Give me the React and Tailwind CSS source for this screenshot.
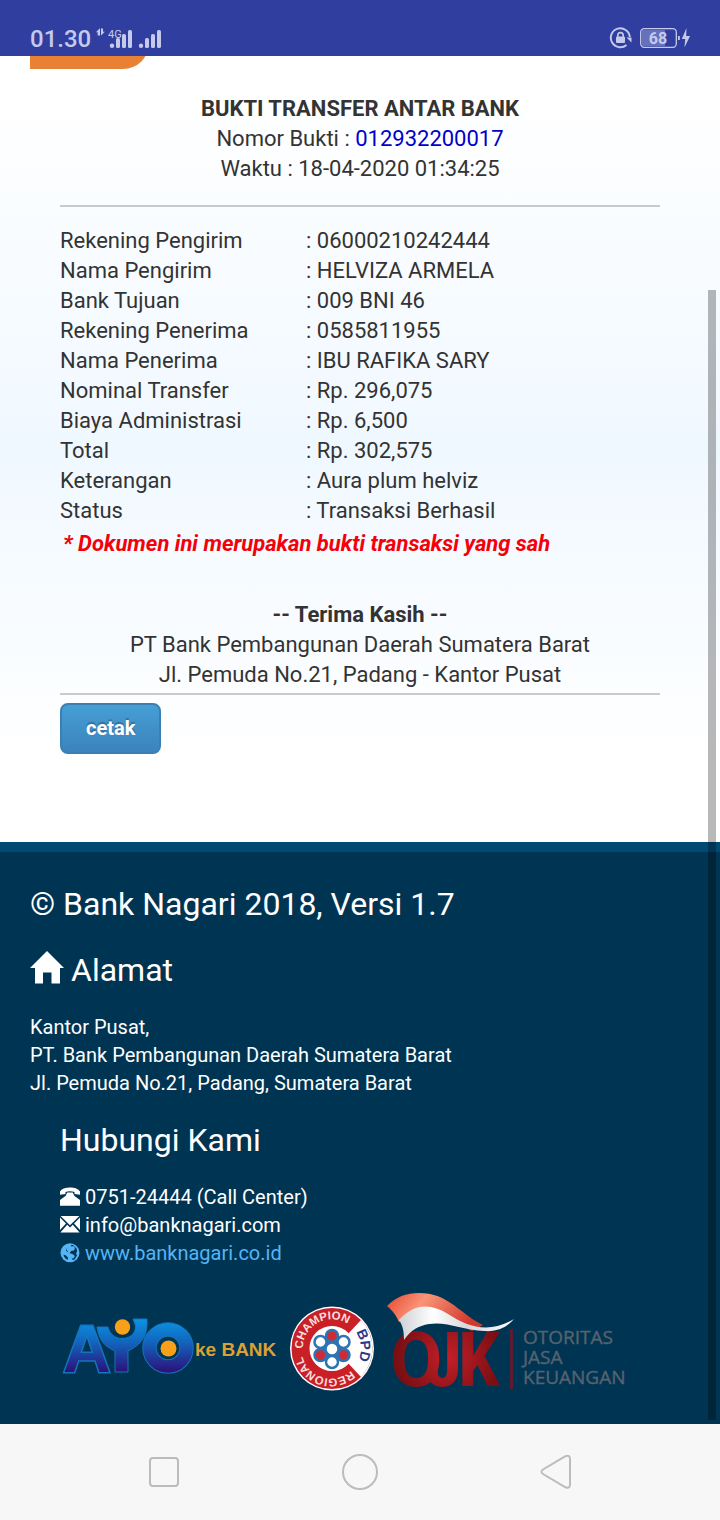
import React from "react";

const details = [
  ["Rekening Pengirim", "06000210242444"],
  ["Nama Pengirim", "HELVIZA ARMELA"],
  ["Bank Tujuan", "009 BNI 46"],
  ["Rekening Penerima", "0585811955"],
  ["Nama Penerima", "IBU RAFIKA SARY"],
  ["Nominal Transfer", "Rp. 296,075"],
  ["Biaya Administrasi", "Rp. 6,500"],
  ["Total", "Rp. 302,575"],
  ["Keterangan", "Aura plum helviz"],
  ["Status", "Transaksi Berhasil"],
];

function StatusBar() {
  return (
    <header className="flex h-14 items-end justify-between bg-[#303f9f] pr-[29px] pb-[3px] pl-[30px] text-[#c5caec]">
      <div className="flex items-center">
        <span className="text-[24px] leading-[28px] font-medium">01.30</span>
        <svg className="ml-1 h-7 w-[68px]" viewBox="0 0 68 28" fill="currentColor" aria-hidden="true">
          <path d="M4.500 3.500 1 7.300h1.700V10.500h2.300V3.500zM6 3.500V10.500l3.800-3.800H8V3.500z" />
          <text x="13" y="12.500" fontSize="11" fontFamily="Roboto, sans-serif">4G</text>
          <circle cx="17" cy="20.700" r="2.200" />
          <rect x="21" y="13" width="4" height="10" rx="1.600" />
          <rect x="27" y="9" width="4" height="14" rx="1.600" />
          <rect x="33" y="5" width="4" height="18" rx="1.600" />
          <circle cx="46" cy="20.700" r="2.200" />
          <rect x="50" y="13" width="4" height="10" rx="1.600" />
          <rect x="56" y="9" width="4" height="14" rx="1.600" />
          <rect x="62" y="5" width="4" height="18" rx="1.600" />
        </svg>
      </div>
      <svg className="h-7 w-[82px]" viewBox="0 0 82 28" fill="none" aria-hidden="true">
        <path d="M17.500 20A9.500 9.500 0 1 1 20.800 12" stroke="currentColor" strokeWidth="1.900" />
        <path d="M17.500 12.500h5v5z" fill="currentColor" />
        <path d="M8.800 12v-1.700a2.700 2.700 0 0 1 5.400 0V12" stroke="currentColor" strokeWidth="1.600" />
        <rect x="7" y="11.500" width="9" height="6.500" rx="1" fill="currentColor" />
        <rect x="33" y="5" width="23" height="16" fill="#6571bb" />
        <rect x="31.700" y="3.700" width="35.600" height="18.600" rx="3.500" stroke="currentColor" strokeWidth="1.300" />
        <rect x="69" y="11" width="1.800" height="4" fill="currentColor" />
        <text x="49" y="18.500" textAnchor="middle" fontSize="16" fontWeight="700" fontFamily="Roboto, sans-serif" fill="currentColor">68</text>
        <path d="M77.500 3 72.800 14h3.400l-.7 8.500L81 11h-3.800z" fill="currentColor" />
      </svg>
    </header>
  );
}

function HomeIcon() {
  return (
    <svg className="h-[38px] w-[34px]" viewBox="0 0 34 38" fill="currentColor" aria-hidden="true">
      <path d="M17 0 34 17H30V32.500H21.500V21.500H13V32.500H5V17H0z" />
    </svg>
  );
}

function PhoneIcon() {
  return (
    <svg className="h-5 w-5" viewBox="0 0 20 20" fill="currentColor" aria-hidden="true">
      <path d="M0 4.600C1.500 2 5.200.500 10 .500s8.500 1.500 10 4.100V7.800L14.500 7V5C12 4 8 4 5.500 5V7L0 7.800z" />
      <path d="M7.300 5.500h5.400L14.500 9 20 13v5.800H0V13L5.500 9z" />
    </svg>
  );
}

function MailIcon() {
  return (
    <svg className="h-5 w-5" viewBox="0 0 20 20" fill="currentColor" aria-hidden="true">
      <path d="M.6 1h18.800L10 10.300z" />
      <path d="M0 2.500 6 8.500 0 15zM20 2.500 14 8.500 20 15zM7.200 9.800 10 12.500 12.800 9.800 19.600 17.500H.4z" />
    </svg>
  );
}

function GlobeIcon() {
  return (
    <svg className="h-5 w-5" viewBox="0 0 20 20" aria-hidden="true">
      <circle cx="10" cy="9.700" r="9.500" fill="currentColor" />
      <path d="M12 1.800 13.500 2.500 16.500 5.500 17.200 8 16 10.500 17 12.500 14.500 16.500 12.500 17 11.800 14.500 10 13.500 10.800 11.500 8.500 10.500 7.500 8.500 6 8 6.800 5.500 9 4.500z" fill="#003453" />
      <path d="M9.500 2.500 12 3.500 13.500 3 15 5 14 7.500 11 8 9.800 10.200 12.500 11 15 13 13 15.800 8.500 13 8 9 6.500 6z" fill="currentColor" />
      <path d="M3.500 11.500 6 12.500 8 14.500 8 16.800 6 16 4 13.500z" fill="#003453" />
    </svg>
  );
}

function AyoLogo() {
  return (
    <svg className="h-[110px] w-[220px] shrink-0" viewBox="0 0 220 110" role="img" aria-label="AYO ke BANK">
      <defs>
        <linearGradient id="ayo" gradientUnits="userSpaceOnUse" x1="0" y1="32" x2="0" y2="84">
          <stop offset="0" stopColor="#0a94e4" />
          <stop offset=".45" stopColor="#1264bd" />
          <stop offset="1" stopColor="#2c137b" />
        </linearGradient>
      </defs>
      <text x="3" y="85" fontFamily="Liberation Sans, sans-serif" fontWeight="700" fontSize="66" fill="url(#ayo)" stroke="#1474bd" strokeWidth="3" paintOrder="stroke">A</text>
      <path d="M37 40H48C50 48 56 51.500 62 51.500C72 51.500 77 44 75 37L73 32H87C88 49 82 57 68 64V85H55V64C44 59 39 53 37 40Z" fill="url(#ayo)" stroke="#1474bd" strokeWidth="1" />
      <circle cx="62.500" cy="40" r="7.700" fill="#f9a01b" />
      <circle cx="108" cy="61" r="18.500" fill="none" stroke="#1474bd" strokeWidth="14.500" />
      <circle cx="108" cy="61" r="18.500" fill="none" stroke="url(#ayo)" strokeWidth="12.500" />
      <circle cx="108.500" cy="61.500" r="8" fill="#f9a01b" />
      <text x="135" y="69" fontFamily="Liberation Sans, sans-serif" fontWeight="700" fontSize="19" fill="#dda033">ke BANK</text>
    </svg>
  );
}

function ChampionLogo() {
  return (
    <svg className="h-[110px] w-[86px] shrink-0" viewBox="0 0 86 110" role="img" aria-label="Regional Champion BPD">
      <defs>
        <path id="ringUpper" d="M14 65A29.200 29.200 0 1 1 72 65" />
        <path id="ringLower" d="M62 83.500A29.200 29.200 0 1 1 22.500 40.500" />
        <path id="ringRight" d="M61.500 39A29 29 0 0 1 62 83" />
      </defs>
      <circle cx="43" cy="61.500" r="42" fill="#fff" />
      <circle cx="43" cy="61.500" r="31.500" fill="none" stroke="#c92027" strokeWidth="18" />
      <path d="M58 48 72 33A41 41 0 0 1 72 90L58 75A20 20 0 0 0 58 48Z" fill="#fff" />
      <circle cx="43" cy="61.500" r="22" fill="#fff" />
      <g fontFamily="Liberation Sans, sans-serif" fontWeight="700" fontSize="11.500">
        <g fill="#f9dede">
          <text><textPath href="#ringUpper" startOffset="3">CHAMPION</textPath></text>
          <text><textPath href="#ringLower" startOffset="0">REGIONAL</textPath></text>
        </g>
        <text fontSize="14" fill="#2b3a88"><textPath href="#ringRight" startOffset="8">BPD</textPath></text>
      </g>
      <circle cx="43" cy="62" r="14" fill="#2d6da9" />
      <g stroke="#2d74b4" strokeWidth="2.500" fill="#fff">
        <circle cx="43" cy="49" r="6" fill="#cf2a35" />
        <circle cx="54.500" cy="55" r="6" />
        <circle cx="54.500" cy="68" r="6" fill="#cf2a35" />
        <circle cx="43" cy="75" r="6" />
        <circle cx="31.500" cy="68" r="6" fill="#cf2a35" />
        <circle cx="31.500" cy="55" r="6" />
        <circle cx="43" cy="62" r="6.500" />
      </g>
    </svg>
  );
}

function OjkLogo() {
  return (
    <svg className="h-[110px] w-[246px] shrink-0 overflow-visible" viewBox="0 0 246 110" role="img" aria-label="OJK Otoritas Jasa Keuangan">
      <defs>
        <radialGradient id="ojk" gradientUnits="userSpaceOnUse" cx="62" cy="70" r="52">
          <stop offset="0" stopColor="#c51f28" />
          <stop offset="1" stopColor="#790f13" />
        </radialGradient>
        <linearGradient id="flag" x1="0" y1="0" x2="1" y2=".3">
          <stop offset="0" stopColor="#e4452f" />
          <stop offset=".4" stopColor="#fa9577" />
          <stop offset="1" stopColor="#d3382c" />
        </linearGradient>
        <linearGradient id="cloth" x1="0" y1="0" x2="1" y2="0">
          <stop offset="0" stopColor="#cfd1d5" />
          <stop offset=".3" stopColor="#fff" />
          <stop offset=".6" stopColor="#d5d6dc" />
          <stop offset="1" stopColor="#fff" />
        </linearGradient>
      </defs>
      <g fontFamily="'Roboto Condensed', Roboto, sans-serif" fontWeight="700" fontSize="76" fill="url(#ojk)">
        <text x="4" y="99" fontFamily="Roboto, sans-serif">O</text>
        <text x="39" y="99">J</text>
        <text x="72" y="99">K</text>
      </g>
      <path d="M1 19C12 7 28 4 44 7C65 11 78 29 97 38L86 44L48 27L13 35C10 28 7 24 1 19Z" fill="url(#flag)" />
      <path d="M13 33C28 16 45 16 62 27C82 40 103 47 128 32C121 40 112 45 98 44C77 43 60 34 43 37C32 39 25 43 18 53C18 45 17 39 13 33Z" fill="url(#cloth)" />
      <rect x="124" y="42" width="3" height="60" fill="#5d1c31" />
      <g fontFamily="Open Sans, sans-serif" fontSize="19" fill="#56626d" stroke="#56626d" strokeWidth=".4">
        <text x="137" y="57">OTORITAS</text>
        <text x="137" y="77">JASA</text>
        <text x="137" y="97">KEUANGAN</text>
      </g>
    </svg>
  );
}

function Receipt() {
  return (
    <main className="bg-linear-to-b from-white from-5% via-[#f0f8ff] to-white to-90% text-[22px] leading-[30px] text-[#333333]">
      <div className="h-[13px] overflow-hidden px-[30px]">
        <div className="-mt-[26px] h-[39px] w-[119px] rounded-br-[26px] bg-[#e98135]" />
      </div>
      <div className="px-[60px] pt-[25px] pb-[88px]">
        <div className="border-b-2 border-[#c8cacc] pb-[21px] text-center">
          <h1 className="font-bold">BUKTI TRANSFER ANTAR BANK</h1>
          <p>Nomor Bukti : <span className="text-[#0000cc]">012932200017</span></p>
          <p>Waktu : 18-04-2020 01:34:25</p>
        </div>
        <table className="mt-[19px] w-full text-left">
          <tbody>
            {details.map(([label, value]) => (
              <tr key={label}>
                <th scope="row" className="w-[41%] p-0 font-normal">{label}</th>
                <td className="p-0">: {value}</td>
              </tr>
            ))}
          </tbody>
        </table>
        <p className="mt-[3px] pl-[3px] font-bold text-[#f50008] italic">* Dokumen ini merupakan bukti transaksi yang sah</p>
        <div className="mt-[41px] border-b-2 border-[#c8cacc] pb-[3px] text-center">
          <p className="font-bold">-- Terima Kasih --</p>
          <p>PT Bank Pembangunan Daerah Sumatera Barat</p>
          <p>Jl. Pemuda No.21, Padang - Kantor Pusat</p>
        </div>
        <button type="button" className="mt-2 block rounded-lg border-2 border-[#3b7fb4] bg-linear-to-b from-[#469fd5] to-[#3b83bc] px-6 py-[9px] text-[20px] leading-[29px] font-bold text-white text-shadow-[0_-2px_1px_rgb(0_0_0_/_0.25)]">
          cetak
        </button>
      </div>
    </main>
  );
}

function Footer() {
  return (
    <footer className="border-t-10 border-[#004a73] bg-[#003453] px-[30px] pt-[33px] pb-[27px] text-[20px] leading-[28px] text-white">
      <h2 className="text-[32px] leading-[38px]">© Bank Nagari 2018, Versi 1.7</h2>
      <h2 className="mt-[28px] flex items-center gap-[7px] text-[32px] leading-[38px]">
        <HomeIcon />
        Alamat
      </h2>
      <address className="mt-6 not-italic">
        Kantor Pusat,<br />
        PT. Bank Pembangunan Daerah Sumatera Barat<br />
        Jl. Pemuda No.21, Padang, Sumatera Barat
      </address>
      <section className="mt-6 pl-[30px]">
        <h2 className="text-[32px] leading-[38px]">Hubungi Kami</h2>
        <ul className="mt-6">
          <li className="flex items-center gap-[5px]"><PhoneIcon />0751-24444 (Call Center)</li>
          <li className="flex items-center gap-[5px]"><MailIcon />info@banknagari.com</li>
          <li>
            <a href="#banknagari" className="flex items-center gap-[5px] text-[#55b5f5]"><GlobeIcon />www.banknagari.co.id</a>
          </li>
        </ul>
        <div className="mt-5 flex">
          <AyoLogo />
          <div className="flex gap-[11px] pl-[9px]">
            <ChampionLogo />
            <OjkLogo />
          </div>
        </div>
      </section>
    </footer>
  );
}

function NavigationBar() {
  return (
    <nav className="flex h-24 items-center justify-between bg-[#f7f7f7] px-[144px] text-[#bcbcbc]">
      <button type="button" aria-label="Recent apps">
        <svg className="h-10 w-10" viewBox="0 0 40 40" fill="none" stroke="currentColor" strokeWidth="2"><rect x="6" y="6" width="28" height="28" rx="3" /></svg>
      </button>
      <button type="button" aria-label="Home">
        <svg className="h-10 w-10" viewBox="0 0 40 40" fill="none" stroke="currentColor" strokeWidth="2"><circle cx="20" cy="20" r="17" /></svg>
      </button>
      <button type="button" aria-label="Back">
        <svg className="h-10 w-10" viewBox="0 0 40 40" fill="none" stroke="currentColor" strokeWidth="2"><path d="M29.500 4.200 7 17.500Q4 19.700 7 22L29.500 35.300Q34 37 34 32.500V7Q34 2.500 29.500 4.200Z" /></svg>
      </button>
    </nav>
  );
}

export default function App() {
  return (
    <div className="bg-white font-[Roboto,sans-serif]">
      <StatusBar />
      <div className="relative">
        <Receipt />
        <Footer />
        <div className="absolute top-[234px] right-1 bottom-1 w-2 bg-black/28" />
      </div>
      <NavigationBar />
    </div>
  );
}
